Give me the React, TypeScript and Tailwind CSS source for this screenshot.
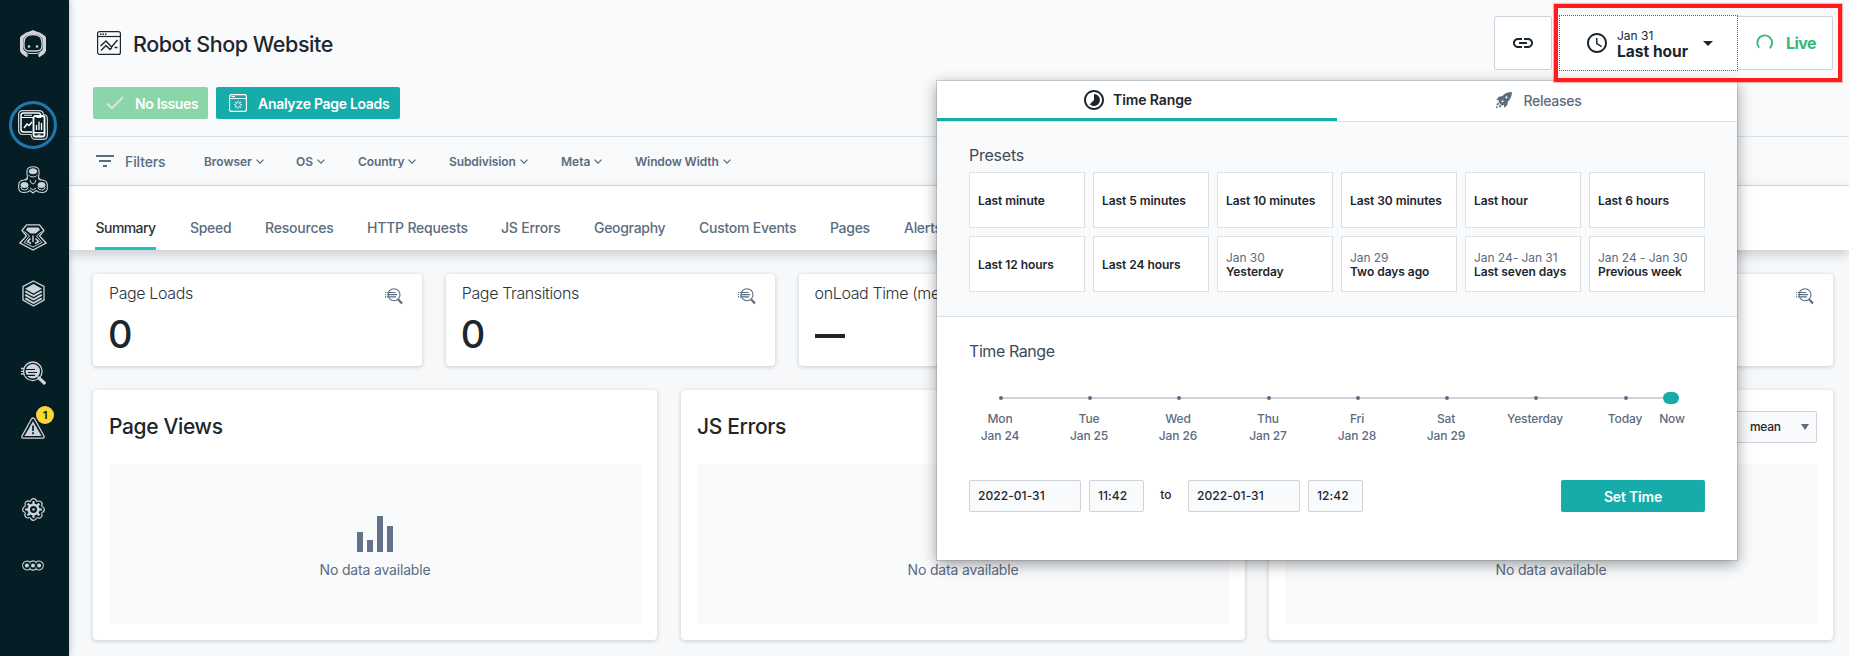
import React from 'react';
import { MdAccessTime, MdArrowDropDown, MdFilterList, MdLink, MdTimelapse } from 'react-icons/md';

const filters = [
  { label: 'Browser', cls: 'w-[92px] tracking-[-0.05px]' },
  { label: 'OS', cls: 'w-[62px]' },
  { label: 'Country', cls: 'w-[91px] tracking-[-0.1px]' },
  { label: 'Subdivision', cls: 'w-[112px] tracking-[-0.1px]' },
  { label: 'Meta', cls: 'w-[74px]' },
  { label: 'Window Width', cls: 'w-[120px] tracking-[-0.12px]' },
];

const tabs = [
  { label: 'Speed', cls: 'w-[75px]' },
  { label: 'Resources', cls: 'w-[102px] tracking-[-0.2px]' },
  { label: 'HTTP Requests', cls: 'w-[134px] tracking-[-0.2px]' },
  { label: 'JS Errors', cls: 'w-[93px] tracking-[-0.2px]' },
  { label: 'Geography', cls: 'w-[105px]' },
  { label: 'Custom Events', cls: 'w-[131px] tracking-[-0.25px]' },
  { label: 'Pages', cls: 'w-[74px]' },
  { label: 'Alerts', cls: 'w-[60px]' },
];

const metrics = [
  { id: 'loads', title: 'Page Loads', value: '0' },
  { id: 'transitions', title: 'Page Transitions', value: '0' },
  { id: 'onload', title: 'onLoad Time (mean)', value: null },
  { id: 'fourth', title: '', value: '' },
  { id: 'fifth', title: '', value: '' },
];

const presets: { label: string; date?: string }[] = [
  { label: 'Last minute' },
  { label: 'Last 5 minutes' },
  { label: 'Last 10 minutes' },
  { label: 'Last 30 minutes' },
  { label: 'Last hour' },
  { label: 'Last 6 hours' },
  { label: 'Last 12 hours' },
  { label: 'Last 24 hours' },
  { label: 'Yesterday', date: 'Jan 30' },
  { label: 'Two days ago', date: 'Jan 29' },
  { label: 'Last seven days', date: 'Jan 24- Jan 31' },
  { label: 'Previous week', date: 'Jan 24 - Jan 30' },
];

const ticks = [
  { day: 'Mon', date: 'Jan 24', cls: 'w-[89px]' },
  { day: 'Tue', date: 'Jan 25', cls: 'w-[89px]' },
  { day: 'Wed', date: 'Jan 26', cls: 'w-[90px]' },
  { day: 'Thu', date: 'Jan 27', cls: 'w-[89px]' },
  { day: 'Fri', date: 'Jan 28', cls: 'w-[89px]' },
  { day: 'Sat', date: 'Jan 29', cls: 'w-[89px]' },
  { day: 'Yesterday', date: '', cls: 'w-[90px]' },
  { day: 'Today', date: '', cls: 'w-[46px]' },
];

function LogoIcon() {
  return (
    <svg className="h-7 w-[26px]" viewBox="0 0 26 28" fill="none">
      <path fillRule="evenodd" fill="#ced4d8" d="M13 0 L24.5 5.5 Q26 6.500 26 8 V20 Q26 22 24 24 L19 27.500 L18 24.500 Q23 23.500 23 18 V11 Q23 3.500 13 3.500 Q3 3.500 3 11 V18 Q3 23.500 8 24.500 L7 27.500 L2 24 Q0 22 0 20 V8 Q0 6.500 1.500 5.500 Z" />
      <path d="M4 12.500 Q4 4.500 13 4.500 Q22 4.500 22 12.500 V15.500 Q22 21 16.500 21 H9.500 Q4 21 4 15.500 Z" stroke="#ced4d8" strokeWidth="1.300" />
      <path d="M2.500 8 Q5 2.500 13 2.500 Q21 2.500 23.500 8" stroke="#ced4d8" strokeWidth="2.500" />
      <path d="M1.800 8 V20 L6 24 M24.200 8 V20 L20 24" stroke="#ced4d8" strokeWidth="3" />
      <path d="M5 22 Q7 23.500 10 23.500 H16 Q19 23.500 21 22" stroke="#ced4d8" strokeWidth="1" />
      <circle cx="9" cy="16.500" r="1.300" fill="#ced4d8" />
      <circle cx="17" cy="16.500" r="1.300" fill="#ced4d8" />
    </svg>
  );
}

function WebsitesIcon() {
  return (
    <svg className="size-[30px]" viewBox="0 0 30 30" fill="none" stroke="#fff">
      <path d="M4.500 .6 H21 Q25 .6 25.500 4.500 Q29.400 5 29.400 9 V25 Q29.400 29.400 25 29.400 H17 Q13.500 29.400 13 24.500 H4.500 Q.6 24.500 .6 20 V4.500 Q.6 .6 4.500 .6 Z" stroke="#c9d1d4" strokeWidth="1.200" />
      <path d="M22.500 5 Q22.500 3 20.500 3 H5.500 Q3 3 3 5.500 V19.500 Q3 22 5.500 22 H14" strokeWidth="1.500" />
      <path d="M3 7.500 H15 M6 5.200 H14" strokeWidth="1.100" />
      <path d="M6 18 L9 14 L11 15.500 L14 12" strokeWidth="1.500" />
      <rect x="15.500" y="6" width="11" height="20.500" rx="2" strokeWidth="1.800" />
      <path d="M18.500 7 H23.500" strokeWidth="2" />
      <path d="M16 22.700 H26" strokeWidth="1.400" />
      <path d="M19.500 25 H22.500" strokeWidth="1.200" />
      <path d="M18.500 20 V15 M21 20 V11.500 M23.500 20 V13" strokeWidth="1.300" />
    </svg>
  );
}

function ApplicationsIcon() {
  return (
    <svg className="h-7 w-[30px]" viewBox="0 0 30 28" fill="none" stroke="#ced4d8">
      <path d="M9 5 Q9 .8 15 .8 Q21 .8 21 5 V8 L20.500 12 Q22 13.500 24 14 Q29.300 14.500 29.300 19 V22 Q29.300 26.500 24 26.500 Q20 26.500 18 24.500 L15 27 L12 24.500 Q10 26.500 6 26.500 Q.7 26.500 .7 22 V19 Q.7 14.500 6 14 Q8 13.500 9.500 12 L9 8 Z" strokeWidth="1.100" />
      <path d="M10.500 9 Q12 11 15 11 Q18 11 19.500 9 M10 12.500 L7.500 14.500 M20 12.500 L22.500 14.500 M12 22 L15 24 L18 22 M12 14 Q13 18 15 18 Q17 18 18 14" strokeWidth="1" />
      <ellipse cx="15" cy="5.300" rx="3.800" ry="2.500" fill="#ced4d8" />
      <ellipse cx="6.500" cy="19" rx="3.600" ry="2.500" fill="#ced4d8" />
      <ellipse cx="23.500" cy="19" rx="3.600" ry="2.500" fill="#ced4d8" />
      <path d="M2.700 21 Q3 24 6.500 24 Q10 24 10.300 21 M19.700 21 Q20 24 23.500 24 Q27 24 27.300 21" strokeWidth="1" />
    </svg>
  );
}

function PlatformsIcon() {
  return (
    <svg className="h-[27px] w-7" viewBox="0 0 28 27" fill="none" stroke="#ced4d8" strokeWidth="1.300">
      <path d="M7.500 .8 H20.500 L25 6.500 L20.500 12 L27 19 L14 26 L1 19 L7.500 12 L3 6.500 Z" />
      <path d="M8.500 3.500 H19.500 L21 6 L16.500 9.500 H11.500 L7 6 Z" fill="#ced4d8" stroke="none" />
      <path d="M5.500 7.500 L10.500 12 L5 18.500 L14 23 L23 18.500 L17.500 12 L22.500 7.500" strokeWidth="1" />
      <path d="M11.500 14.500 L8.500 17.500 L12 19.500 M16.500 14.500 L19.500 17.500 L16 19.500" strokeWidth="1.600" />
      <path d="M14 11.500 V18" strokeWidth="1.400" />
    </svg>
  );
}

function InfrastructureIcon() {
  return (
    <svg className="h-[27px] w-[23px]" viewBox="0 0 23 27" fill="none" stroke="#ced4d8">
      <path d="M11.500 1 L22 6.500 V20 L11.500 26 L1 20 V6.500 Z" strokeWidth="1.300" />
      <path d="M11.500 4 L20 8.700 L11.500 13.500 L3 8.700 Z" fill="#ced4d8" stroke="none" />
      <path d="M3.200 11.300 L11.500 16 L19.800 11.300 M3.200 14.800 L11.500 19.500 L19.800 14.800 M3.200 18.300 L11.500 23 L19.800 18.300" strokeWidth="1.900" />
    </svg>
  );
}

function AnalyticsIcon() {
  return (
    <svg className="h-6 w-[25px]" viewBox="0 0 25 24" fill="none" stroke="#ced4d8">
      <circle cx="11.800" cy="10.300" r="9.300" strokeWidth="1.300" />
      <circle cx="11.800" cy="10.300" r="7.200" fill="#ced4d8" stroke="none" />
      <path d="M4 8.500 H14 M7 11.500 H16 M4 14.300 H14" stroke="#051e26" strokeWidth="1.200" />
      <path d="M0 7.500 H3 M0 10.300 H2 M0 13 H3" strokeWidth="1.300" />
      <path d="M18 17 L23.300 22" strokeWidth="3.200" strokeLinecap="round" />
    </svg>
  );
}

function EventsIcon() {
  return (
    <svg className="h-[22px] w-6" viewBox="0 0 24 22" fill="none">
      <path d="M12 1 Q13 1 13.700 2.200 L23 19 Q23.600 21 22 21.200 H2 Q.4 21 1 19 L10.300 2.200 Q11 1 12 1 Z" stroke="#ced4d8" strokeWidth="1.300" />
      <path d="M12 4.200 L20.500 19 H3.500 Z" fill="#ced4d8" />
      <path d="M12 8.500 V14 M12 15.300 V17.200" stroke="#051e26" strokeWidth="1.700" />
    </svg>
  );
}

const rays = [0, 45, 90, 135, 180, 225, 270, 315];

function SettingsIcon() {
  return (
    <svg className="size-[23px]" viewBox="0 0 23 23" fill="none">
      {rays.map((a) => (
        <circle key={a} cx="11.500" cy="3.700" r="3" stroke="#ced4d8" strokeWidth="1.200" transform={`rotate(${a} 11.500 11.500)`} />
      ))}
      <circle cx="11.500" cy="11.500" r="8.600" fill="#051e26" />
      {rays.map((a) => (
        <path key={a} d="M11.500 3.200 V7" stroke="#ced4d8" strokeWidth="2.200" transform={`rotate(${a} 11.500 11.500)`} />
      ))}
      <circle cx="11.500" cy="11.500" r="4.800" stroke="#ced4d8" strokeWidth="2.600" />
      <circle cx="11.500" cy="11.500" r="1.200" fill="#ced4d8" />
    </svg>
  );
}

function MoreIcon() {
  return (
    <svg className="h-[11px] w-[22px]" viewBox="0 0 22 11" fill="none">
      <path d="M8 2.200 A4.400 4.400 0 1 0 8 8.800 Q11 11.500 14 8.800 A4.400 4.400 0 1 0 14 2.200 Q11 -.5 8 2.200" stroke="#ced4d8" strokeWidth="1.100" />
      <path d="M8 2.500 V3.500 M8 7.500 V8.500 M14 2.500 V3.500 M14 7.500 V8.500" stroke="#ced4d8" strokeWidth="1.100" />
      <circle cx="4.900" cy="5.500" r="2" fill="#ced4d8" />
      <circle cx="11" cy="5.500" r="2" fill="#ced4d8" />
      <circle cx="17.100" cy="5.500" r="2" fill="#ced4d8" />
    </svg>
  );
}

function SiteIcon() {
  return (
    <svg className="size-6" viewBox="0 0 24 24" fill="none" stroke="#1c262f">
      <rect x=".6" y=".6" width="22.800" height="22.800" rx="2" strokeWidth="1.200" />
      <path d="M.6 5.500 H23.400" strokeWidth="1.200" />
      <path d="M3 3.200 H9.500" strokeWidth="1.400" strokeDasharray="1.500 1" />
      <path d="M3.500 15 L9 10 L14.500 16 L20.500 9 M4 19.500 L9 14.500 L13 18.500 L15 16.500 M17.500 16.500 H20.500" strokeWidth="1.400" />
    </svg>
  );
}

function PageLoadIcon() {
  return (
    <svg className="size-[18px]" viewBox="0 0 18 18" fill="none" stroke="#fff">
      <rect x=".6" y=".6" width="16.800" height="16.800" rx="2" strokeWidth="1.100" />
      <path d="M.6 4.500 H17.400 M2.500 2.500 H6" strokeWidth="1" />
      {rays.map((a) => (
        <path key={a} d="M9 6.800 V9" strokeWidth="1" transform={`rotate(${a} 9 10.800)`} />
      ))}
    </svg>
  );
}

function InspectIcon() {
  return (
    <svg className="h-[17px] w-[18px]" viewBox="0 0 18 17" fill="none" stroke="#5b6c7e">
      <circle cx="9" cy="6.700" r="6" strokeWidth="1.100" />
      <path d="M4 4.500 H10.500 M2.500 6.700 H12 M4 8.900 H11" strokeWidth="1.200" />
      <path d="M0 4.500 H1.200 M0 6.700 H1.200 M0 8.900 H1.200 M2 4.500 H3 M2 8.900 H3" strokeWidth="1.100" />
      <path d="M13.200 11.500 L17 15.500" strokeWidth="2.200" />
    </svg>
  );
}

function RocketIcon() {
  return (
    <svg className="size-4" viewBox="0 0 16 16" fill="#5b6c7e">
      <path fillRule="evenodd" d="M16 0 Q9.500 .2 6.500 4 L2.800 4.700 L.3 8 L3.200 8.200 L2.300 10 L6 13.700 L7.800 12.700 L8.200 15.700 L11.200 13.200 L12 9.500 Q15.800 6 16 0 Z M10.500 4.200 A1.100 1.100 0 1 0 10.510 4.200 Z M6.500 8.300 A1 1 0 1 0 6.510 8.300 Z" />
      <path d="M1.800 10.500 L3.200 12 L1.500 13.500 L.3 12.500 Z M3.800 12.600 L5.500 14 L4 15.500 L2.800 14.500 Z M0 14.500 L1.500 14.300 L1.500 16 L0 16 Z" />
    </svg>
  );
}

function BarsIcon() {
  return (
    <svg className="h-9 w-9" viewBox="0 0 36 36" fill="#627387">
      <rect x="0" y="16" width="6" height="20" />
      <rect x="10" y="24" width="6" height="12" />
      <rect x="20" y="0" width="6" height="36" />
      <rect x="30" y="10" width="6" height="26" />
    </svg>
  );
}

function Chevron() {
  return (
    <svg className="ml-1 h-[5px] w-2" viewBox="0 0 8 5" fill="none" stroke="#5b6c7e" strokeWidth="1.300">
      <path d="M.5 .6 L4 4.100 L7.500 .6" />
    </svg>
  );
}

function Sidebar() {
  return (
    <aside className="relative z-10 flex w-[69px] shrink-0 flex-col items-center bg-[#051e26] pr-[3px] pt-[30px] shadow-[1px_0_6px_rgba(0,20,30,0.22)]">
      <LogoIcon />
      <div className="mt-[43px] flex size-12 items-center justify-center rounded-full border-[3px] border-[#1f77ac]">
        <WebsitesIcon />
      </div>
      <div className="mt-[17px]"><ApplicationsIcon /></div>
      <div className="mt-[30px]"><PlatformsIcon /></div>
      <div className="mt-[29px]"><InfrastructureIcon /></div>
      <div className="mt-[54px]"><AnalyticsIcon /></div>
      <div className="relative mt-[32px]">
        <EventsIcon />
        <span className="absolute -top-[11px] left-[15px] flex size-[18px] items-center justify-center rounded-full bg-[#fdd733] text-[11px] font-bold text-[#1c262f]">1</span>
      </div>
      <div className="mt-[59px]"><SettingsIcon /></div>
      <div className="mt-[39px]"><MoreIcon /></div>
    </aside>
  );
}

function ChartCard({ title, select = false }: { title?: string; select?: boolean }) {
  return (
    <section className="h-[250px] rounded-[4px] bg-white px-4 pt-[21px] shadow-[0_1px_4px_rgba(30,50,60,0.22)]">
      <div className="flex h-[32px] items-center justify-between">
        {title && <h2 className="text-[21px] font-medium tracking-[-0.35px] text-[#222629]">{title}</h2>}
        {select && (
          <div className="ml-auto flex h-8 w-[92px] items-center justify-between rounded-[2px] border border-[#cdd3d8] bg-[#f9fafc] pl-6 pr-[7px] text-[12px] font-medium tracking-[-0.3px] text-[#1c262f]">
            mean
            <svg className="h-[6px] w-2" viewBox="0 0 8 6" fill="#5b6c7e"><path d="M0 0 H8 L4 6 Z" /></svg>
          </div>
        )}
      </div>
      <div className="mt-[21px] flex h-40 flex-col items-center bg-[#f9fafc] pt-[52px]">
        <BarsIcon />
        <p className="mt-2 text-[14px] leading-5 tracking-[-0.17px] text-[#5b6c7e]">No data available</p>
      </div>
    </section>
  );
}

function TimePopover() {
  return (
    <div className="absolute left-[937px] top-[81px] z-20 h-[479px] w-[800px] bg-white shadow-[0_0_0_1px_rgba(100,115,125,0.25),0_4px_14px_rgba(0,0,0,0.4)]">
      <div className="flex h-[41px] border-b border-[#dbe0e5] text-[14px]">
        <div className="flex h-10 w-[400px] items-center justify-center border-b-[3px] border-[#17aba9] font-semibold tracking-[-0.1px] text-[#1c262f]">
          <MdTimelapse className="mr-[7px] size-6" />
          Time Range
        </div>
        <div className="flex h-[38px] flex-1 items-center justify-center pl-[4px] font-medium tracking-[-0.28px] text-[#5b6c7e]">
          <span className="mr-[11px]"><RocketIcon /></span>
          Releases
        </div>
      </div>
      <div className="h-[195px] border-b border-[#dbe0e5] bg-[#f9fafc] px-8 pt-[21px]">
        <h3 className="text-[16px] leading-6 tracking-[-0.24px] text-[#3f4a55]">Presets</h3>
        <div className="mt-[5px] grid grid-cols-6 gap-2">
          {presets.map((p) => (
            <div key={p.label} className="flex h-14 flex-col justify-center whitespace-nowrap border border-[#dbe0e5] bg-white pl-2 pt-px text-[12px] font-semibold leading-[14px] tracking-[-0.05px] text-[#1c262f]">
              {p.date && <span className="font-normal text-[#5b6c7e]">{p.date}</span>}
              <span>{p.label}</span>
            </div>
          ))}
        </div>
      </div>
      <div className="px-8 pt-[22px]">
        <h3 className="text-[16px] leading-6 tracking-[-0.42px] text-[#3f4a55]">Time Range</h3>
        <div className="mt-[29px] flex h-3 items-center pl-[30px]">
          {ticks.map((t) => (
            <div key={t.day} className={`flex h-[2px] items-center ${t.cls}`}>
              <span className="size-1 shrink-0 rounded-full bg-[#5b6c7e]" />
              <span className="h-[2px] flex-1 bg-[#cdd3d8]" />
            </div>
          ))}
          <span className="-ml-[7px] h-3 w-4 rounded-[6px] bg-[#17aba9]" />
        </div>
        <div className="mt-[6px] flex text-[12px] font-medium leading-[17px] tracking-[-0.13px] text-[#5b6c7e]">
          <div className="flex h-[34px] pl-[31px]">
            {ticks.map((t) => (
              <div key={t.day} className={`flex ${t.cls}`}>
                <div className="flex w-0 flex-col items-center whitespace-nowrap">
                  <span>{t.day}</span>
                  {t.date && <span>{t.date}</span>}
                </div>
              </div>
            ))}
            <div className="ml-px flex w-0 justify-center whitespace-nowrap">Now</div>
          </div>
        </div>
        <div className="mt-[36px] flex h-8 text-[12px] font-medium tracking-[0.06px] text-[#1c262f]">
          <div className="flex w-28 items-center rounded-[2px] border border-[#cdd3d8] bg-[#f9fafc] pl-2">2022-01-31</div>
          <div className="ml-2 flex w-[55px] items-center rounded-[2px] border border-[#cdd3d8] bg-[#f9fafc] pl-2">11:42</div>
          <div className="flex w-[44px] items-center justify-center pb-[2px]">to</div>
          <div className="flex w-28 items-center rounded-[2px] border border-[#cdd3d8] bg-[#f9fafc] pl-2">2022-01-31</div>
          <div className="ml-2 flex w-[55px] items-center rounded-[2px] border border-[#cdd3d8] bg-[#f9fafc] pl-2">12:42</div>
          <button className="ml-auto w-36 rounded-[2px] bg-[#17aba9] text-[14px] font-semibold tracking-[-0.2px] text-white">Set Time</button>
        </div>
      </div>
    </div>
  );
}

export default function App() {
  return (
    <div className="relative flex h-[656px] w-[1849px] overflow-hidden bg-[#f6f8fa] font-['Inter',sans-serif]">
      <Sidebar />
      <main className="flex min-w-0 flex-1 flex-col">
        <header className="flex h-[137px] justify-between border-b border-[#dbe0e5] bg-[#f9fafc] pl-6 pr-4">
          <div>
            <div className="mt-[27px] flex h-8 items-center pl-1">
              <SiteIcon />
              <h1 className="ml-3 mt-[2px] text-[21.5px] font-medium tracking-[-0.45px] text-[#1c262f]">Robot Shop Website</h1>
            </div>
            <div className="mt-7 flex h-8 gap-2 text-[14px] font-semibold text-white">
              <button className="flex w-[115px] items-center rounded-[2px] bg-[#8ad6a8] pl-[13px] tracking-[-0.35px]">
                <svg className="mr-[11px] h-[14px] w-[18px]" viewBox="0 0 18 14" fill="none" stroke="#dbe5e3" strokeWidth="1.900"><path d="M1 7.500 L6 12.500 L17 1" /></svg>
                <span className="mt-px">No Issues</span>
              </button>
              <button className="flex w-[184px] items-center rounded-[2px] bg-[#17aba9] pl-[13px] tracking-[-0.3px]">
                <span className="mr-[11px]"><PageLoadIcon /></span>
                <span className="mt-px">Analyze Page Loads</span>
              </button>
            </div>
          </div>
          <div className="mt-4 flex h-[54px]">
            <button className="flex w-[58px] items-center justify-center rounded-[2px] border border-[#cdd3d8] bg-white text-[#1c262f]">
              <MdLink className="size-6" />
            </button>
            <button className="-my-px ml-[7px] flex w-[179px] items-center border border-dotted border-[#5c666d] bg-white pl-[25px] text-left text-[#1c262f]">
              <MdAccessTime className="size-6" />
              <span className="ml-2 mt-[2px] flex w-[77px] flex-col whitespace-nowrap">
                <span className="text-[12px] leading-[14px]">Jan 31</span>
                <span className="text-[15.5px] font-bold leading-[17px] tracking-[0.02px]">Last hour</span>
              </span>
              <MdArrowDropDown className="ml-[2px] size-6" />
            </button>
            <button className="flex w-[95px] items-center rounded-r-[2px] border border-l-0 border-[#cdd3d8] bg-white pl-[18px] text-[#33b978]">
              <svg className="size-[18px]" viewBox="0 0 18 18" fill="none" stroke="currentColor" strokeWidth="1.900"><path d="M3.200 13.700 A7.400 7.400 0 1 1 13.800 14.200" /></svg>
              <span className="ml-[12px] text-[16px] font-bold tracking-[-0.6px]">Live</span>
            </button>
          </div>
        </header>

        <div className="flex h-[49px] items-center border-b border-[#dbe0e5] bg-[#f9fafc] pl-6 text-[12px] font-semibold text-[#5b6c7e]">
          <MdFilterList className="size-6" />
          <span className="ml-[8px] mt-px w-[79px] text-[14px] font-medium tracking-[-0.12px]">Filters</span>
          {filters.map((f) => (
            <div key={f.label} className={`mt-px flex items-center whitespace-nowrap ${f.cls}`}>
              {f.label}
              <Chevron />
            </div>
          ))}
        </div>

        <nav className="relative flex h-[64px] items-end bg-white pl-[26px] text-[14px] font-medium tracking-[-0.3px] text-[#5b6c7e] shadow-[0_4px_12px_rgba(0,20,30,0.2)]">
          <div className="mr-[34px] flex h-[33px] w-[61px] justify-center whitespace-nowrap border-b-[3px] border-[#18c3c4] leading-[22px] tracking-[-0.6px] text-[#2b343c]">Summary</div>
          {tabs.map((t) => (
            <div key={t.label} className={`h-[33px] whitespace-nowrap leading-[22px] ${t.cls}`}>{t.label}</div>
          ))}
        </nav>

        <div className="px-6 pr-4 pt-6">
          <div className="grid grid-cols-5 gap-6">
            {metrics.map((m) => (
              <section key={m.id} className="h-[92px] rounded-[4px] bg-white px-4 pt-[7px] shadow-[0_1px_4px_rgba(30,50,60,0.22)]">
                <div className="flex justify-between">
                  <h2 className="whitespace-nowrap text-[16px] font-light leading-6 tracking-[-0.38px] text-[#2b343c]">{m.title}</h2>
                  <span className="mr-[3px] mt-[7px]"><InspectIcon /></span>
                </div>
                {m.value === null ? (
                  <div className="mt-[29px] h-1 w-[30px] bg-[#1c262f]" />
                ) : (
                  <div className="-ml-px mt-[9px] text-[38px] font-medium leading-[40px] text-[#1c262f]">{m.value}</div>
                )}
              </section>
            ))}
          </div>
          <div className="mt-6 grid grid-cols-3 gap-6">
            <ChartCard title="Page Views" />
            <ChartCard title="JS Errors" />
            <ChartCard select />
          </div>
        </div>
      </main>

      <TimePopover />
      <div className="pointer-events-none absolute left-[1554px] top-[4px] z-30 h-[78px] w-[288px] border-[4px] border-[#fe1c1c] shadow-[0_0_1px_1px_rgba(254,28,28,0.3)]" />
    </div>
  );
}
